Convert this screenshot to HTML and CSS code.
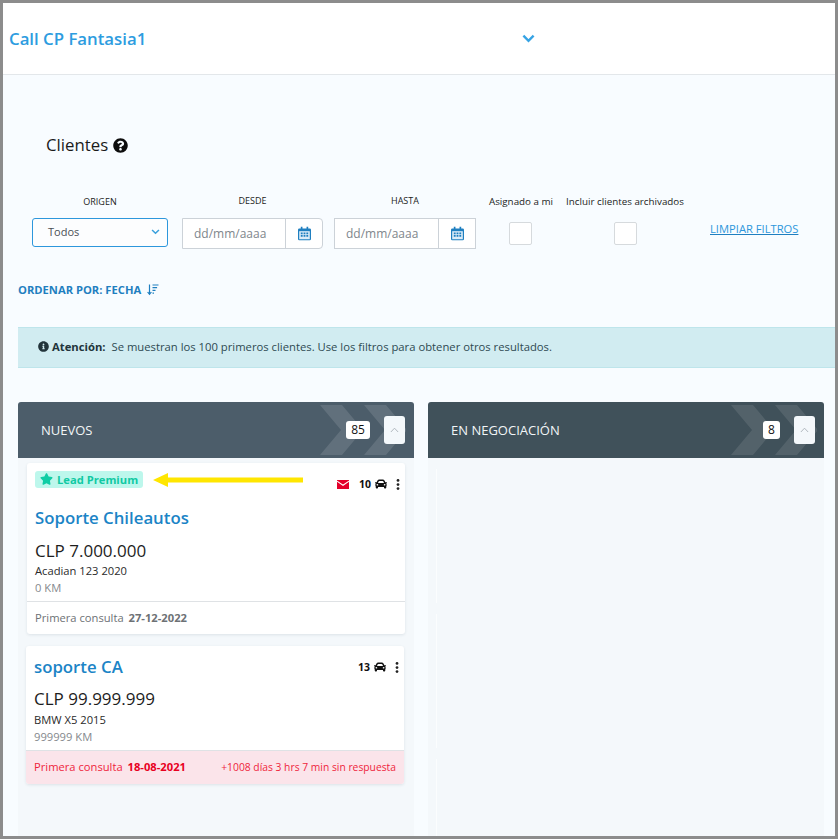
FILE: index.html
```html
<!DOCTYPE html>
<html lang="es">
<head>
<meta charset="utf-8">
<title>Clientes</title>
<link rel="stylesheet" href="styles.css">
</head>
<body>
<div class="frame">
  <header class="topbar">
    <h1 class="account">Call CP Fantasia1</h1>
    <svg class="top-chevron" viewBox="0 0 14 9"><path d="M1.500 1.500 7 7l5.500-5.500" fill="none" stroke="#36a3e4" stroke-width="2.600"/></svg>
  </header>
  <main class="content">
    <div class="title-row">
      <h2 class="title">Clientes</h2>
      <svg class="help" viewBox="0 0 512 512"><path fill="#0d0d0d" d="M504 256c0 136.997-111.043 248-248 248S8 392.997 8 256C8 119.083 119.043 8 256 8s248 111.083 248 248zM262.655 90c-54.497 0-89.255 22.957-116.549 63.758-3.536 5.286-2.353 12.415 2.715 16.258l34.699 26.31c5.205 3.947 12.621 3.008 16.665-2.122 17.864-22.658 30.113-35.797 57.303-35.797 20.429 0 45.698 13.148 45.698 32.958 0 14.976-12.363 22.667-32.534 33.976C247.128 238.528 216 254.941 216 296v4c0 6.627 5.373 12 12 12h56c6.627 0 12-5.373 12-12v-1.333c0-28.462 83.186-29.647 83.186-106.667 0-58.002-60.165-102-116.531-102zM256 338c-25.365 0-46 20.635-46 46 0 25.364 20.635 46 46 46s46-20.636 46-46c0-25.365-20.635-46-46-46z"/></svg>
    </div>

    <div class="filters">
      <div class="field f-origin">
        <label class="label">ORIGEN</label>
        <div class="select"><span>Todos</span>
          <svg class="select-chev" viewBox="0 0 10 7"><path d="M1 1.200 5 5l4-3.800" fill="none" stroke="#3aa0dc" stroke-width="1.800"/></svg>
        </div>
      </div>
      <div class="field f-desde">
        <label class="label label-date">DESDE</label>
        <div class="date rounded"><span class="date-text">dd/mm/aaaa</span>
          <span class="date-btn"><svg class="cal" viewBox="0 0 14 15"><use href="#cal"/></svg></span>
        </div>
      </div>
      <div class="field f-hasta">
        <label class="label label-date">HASTA</label>
        <div class="date"><span class="date-text">dd/mm/aaaa</span>
          <span class="date-btn"><svg class="cal" viewBox="0 0 14 15"><use href="#cal"/></svg></span>
        </div>
      </div>
      <div class="field f-asig">
        <label class="label label-case">Asignado a mi</label>
        <span class="check"></span>
      </div>
      <div class="field f-arch">
        <label class="label label-case">Incluir clientes archivados</label>
        <span class="check check-arch"></span>
      </div>
      <a class="clear" href="#">LIMPIAR FILTROS</a>
    </div>

    <div class="sort">ORDENAR POR: FECHA
      <svg class="sort-icon" viewBox="0 0 12 12"><path d="M2.500 .5v9.500M.6 8 2.500 10.400 4.400 8M5.500 1h6M5.500 3.700h4.600M5.500 6.400h3M5.500 9.100h1.500" fill="none" stroke="#1f7fc0" stroke-width="1.200"/></svg>
    </div>

    <div class="alert">
      <svg class="info" viewBox="0 0 512 512"><path fill="#22343b" d="M256 8C119.043 8 8 119.083 8 256c0 136.997 111.043 248 248 248s248-111.003 248-248C504 119.083 392.957 8 256 8zm0 110c23.196 0 42 18.804 42 42s-18.804 42-42 42-42-18.804-42-42 18.804-42 42-42zm56 254c0 6.627-5.373 12-12 12h-88c-6.627 0-12-5.373-12-12v-24c0-6.627 5.373-12 12-12h12v-64h-12c-6.627 0-12-5.373-12-12v-24c0-6.627 5.373-12 12-12h64c6.627 0 12 5.373 12 12v100h12c6.627 0 12 5.373 12 12v24z"/></svg>
      <strong>Atención:</strong>&nbsp;<span>Se muestran los 100 primeros clientes. Use los filtros para obtener otros resultados.</span>
    </div>

    <div class="board">
      <section class="col">
        <div class="col-head head-new">
          <svg class="chevrons" viewBox="0 0 86 50"><path d="M0 0h22l21 25-21 25H0l21-25zM44 0h22l21 25-21 25H44l21-25z" fill="#fff" fill-opacity=".12"/></svg>
          <span class="col-title">NUEVOS</span>
          <span class="count">85</span>
          <button class="collapse"><svg viewBox="0 0 10 6"><path d="M1 5.200 5 1l4 4.200" fill="none" stroke="#a9b1b8" stroke-width="1"/></svg></button>
        </div>
        <div class="col-body">
          <article class="card card-one">
            <div class="card-main">
              <div class="premium-row">
                <span class="badge"><svg class="star" viewBox="0 0 576 512"><path fill="#0fcda5" d="M259.3 17.8L194 150.2 47.9 171.5c-26.2 3.8-36.7 36.1-17.7 54.6l105.7 103-25 145.5c-4.5 26.3 23.2 46 46.4 33.7L288 439.6l130.7 68.7c23.2 12.2 50.9-7.4 46.4-33.7l-25-145.5 105.7-103c19-18.5 8.5-50.8-17.7-54.6L382 150.2 316.7 17.8c-11.7-23.6-45.6-23.9-57.4 0z"/></svg>Lead Premium</span>
                <svg class="arrow" viewBox="0 0 150 14"><path d="M0 7 15 0v4.500h135v5H15V14z" fill="#ffe600"/></svg>
                <div class="meta meta-one">
                  <svg class="mail" viewBox="0 0 12 9"><rect width="12" height="9" fill="#e4002b"/><path d="M0 1.200 6 5.300l6-4.100" fill="none" stroke="#fff" stroke-width="1.100"/></svg>
                  <span class="meta-num">10</span>
                  <svg class="car" viewBox="0 0 512 512"><use href="#car"/></svg>
                  <svg class="dots" viewBox="0 0 4 12"><circle cx="2" cy="1.600" r="1.500"/><circle cx="2" cy="6" r="1.500"/><circle cx="2" cy="10.400" r="1.500"/></svg>
                </div>
              </div>
              <h3 class="name name-one">Soporte Chileautos</h3>
              <div class="price">CLP 7.000.000</div>
              <div class="vehicle">Acadian 123 2020</div>
              <div class="km">0 KM</div>
            </div>
            <div class="card-foot">Primera consulta <b>27-12-2022</b></div>
          </article>

          <article class="card card-two">
            <div class="card-main main-two">
              <div class="name-row">
                <h3 class="name">soporte CA</h3>
                <div class="meta meta-two">
                  <span class="meta-num">13</span>
                  <svg class="car" viewBox="0 0 512 512"><use href="#car"/></svg>
                  <svg class="dots" viewBox="0 0 4 12"><circle cx="2" cy="1.600" r="1.500"/><circle cx="2" cy="6" r="1.500"/><circle cx="2" cy="10.400" r="1.500"/></svg>
                </div>
              </div>
              <div class="price">CLP 99.999.999</div>
              <div class="vehicle">BMW X5 2015</div>
              <div class="km">999999 KM</div>
            </div>
            <div class="card-foot foot-alert"><span>Primera consulta <b>18-08-2021</b></span><span class="late">+1008 días 3 hrs 7 min sin respuesta</span></div>
          </article>
        </div>
      </section>

      <section class="col">
        <div class="col-head head-neg">
          <svg class="chevrons" viewBox="0 0 86 50"><path d="M0 0h22l21 25-21 25H0l21-25zM44 0h22l21 25-21 25H44l21-25z" fill="#fff" fill-opacity=".1"/></svg>
          <span class="col-title">EN NEGOCIACIÓN</span>
          <span class="count count-neg">8</span>
          <button class="collapse"><svg viewBox="0 0 10 6"><path d="M1 5.200 5 1l4 4.200" fill="none" stroke="#a9b1b8" stroke-width="1"/></svg></button>
        </div>
        <div class="col-body body-neg">
          <div class="ghost"></div>
          <div class="ghost"></div>
          <div class="ghost"></div>
        </div>
      </section>
    </div>
  </main>
</div>

<svg class="defs" aria-hidden="true">
  <symbol id="cal" viewBox="0 0 14 15">
    <path fill="#1f7fc0" d="M3 0h1.800v2H9.200V0H11v2h1.500A1.500 1.500 0 0 1 14 3.500v10a1.500 1.500 0 0 1-1.500 1.500h-11A1.500 1.500 0 0 1 0 13.500v-10A1.500 1.500 0 0 1 1.500 2H3z"/>
    <rect x="1.300" y="5" width="11.400" height="8.700" fill="#dcecf8"/>
    <path fill="#1f7fc0" d="M3 6.500h2v1.700H3zM6 6.500h2v1.700H6zM9 6.500h2v1.700H9zM3 9.200h2v1.700H3zM6 9.200h2v1.700H6zM9 9.200h2v1.700H9z"/>
  </symbol>
  <symbol id="car" viewBox="0 0 512 512">
    <path fill="#111" d="M499.99 176h-59.87l-16.64-41.6C406.38 91.63 365.57 64 319.5 64h-127c-46.06 0-86.88 27.63-103.99 70.4L71.87 176H12.01C4.2 176-1.53 183.34.37 190.91l6 24C7.7 220.25 12.5 224 18.01 224h20.07C24.65 235.73 16 252.78 16 272v48c0 16.12 6.16 30.67 16 41.93V416c0 17.67 14.33 32 32 32h32c17.67 0 32-14.33 32-32v-32h256v32c0 17.67 14.33 32 32 32h32c17.67 0 32-14.33 32-32v-54.07c9.84-11.25 16-25.8 16-41.93v-48c0-19.22-8.65-36.27-22.07-48H494c5.51 0 10.31-3.75 11.64-9.09l6-24c1.890-7.570-3.840-14.910-11.650-14.910zm-352.060-17.830c7.290-18.220 24.940-30.170 44.570-30.170h127c19.630 0 37.280 11.950 44.570 30.170L384 208H128l19.930-49.830zM96 319.800c-19.200 0-32-12.760-32-31.900S76.800 256 96 256s48 28.710 48 47.850-28.800 15.950-48 15.950zm320 0c-19.200 0-48 3.190-48-15.950S396.800 256 416 256s32 12.760 32 31.900-12.800 31.900-32 31.900z"/>
  </symbol>
</svg>
</body>
</html>
```
FILE: styles.css
```css
* { box-sizing: border-box; }
html, body { margin: 0; padding: 0; }
body {
  width: 838px;
  height: 839px;
  overflow: hidden;
  font-family: "Open Sans", "Liberation Sans", sans-serif;
  background: #8c8c8c;
}
.defs { width: 0; height: 0; position: absolute; }
.frame {
  width: 838px;
  height: 839px;
  border: 3px solid #8c8c8c;
  overflow: hidden;
  background: #f8fcff;
}
.topbar {
  height: 72px;
  background: #fff;
  border-bottom: 1px solid #e3e7ea;
  display: flex;
  align-items: center;
  padding: 0 0 0 6px;
  position: relative;
}
.account {
  margin: 0;
  font-size: 16.800px;
  font-weight: 600;
  color: #2d9ce0;
  line-height: 72px;
}
.top-chevron {
  width: 13px;
  height: 9px;
  position: absolute;
  left: 519px;
  top: 31px;
}
.title-row {
  display: flex;
  align-items: center;
  gap: 5px;
  padding: 59px 0 0 43px;
  height: 81px;
}
.title {
  margin: 0;
  font-size: 16.800px;
  font-weight: 400;
  line-height: 22px;
  color: #1a1a1a;
}
.help { width: 15px; height: 15px; }
.filters {
  display: flex;
  align-items: flex-start;
  padding: 0 0 0 29px;
  margin-top: 35px;
  height: 57px;
}
.field { display: flex; flex-direction: column; align-items: center; }
.f-origin { width: 136px; margin-right: 14px; }
.f-desde { width: 141px; margin-right: 11px; }
.f-hasta { width: 142px; margin-right: 13px; }
.f-asig { width: 64px; margin-right: 13px; }
.f-arch { width: 118px; margin-right: 27px; }
.label {
  height: 20px;
  margin-bottom: 7px;
  font-size: 9px;
  line-height: 22px;
  color: #1c1c1c;
  white-space: nowrap;
}
.label-date { margin-bottom: 8px; line-height: 20px; }
.label-case { margin-bottom: 8px; font-size: 9.800px; font-weight: 400; line-height: 22px; }
.select {
  width: 136px;
  height: 29px;
  border: 1px solid #2d97dc;
  border-radius: 3px;
  background: #fcfdfe;
  display: flex;
  align-items: center;
  justify-content: space-between;
  padding: 0 7px 2px 15px;
  font-size: 11px;
  color: #4a4f55;
}
.select-chev { width: 9px; height: 6px; }
.date {
  width: 100%;
  height: 31px;
  border: 1px solid #ccd2d8;
  background: #fff;
  display: flex;
  margin-top: -1px;
}
.rounded { border-radius: 0 4px 4px 0; }
.date-text {
  flex: 1;
  font-size: 12px;
  line-height: 29px;
  padding-left: 11px;
  color: #80868c;
}
.date-btn {
  width: 37px;
  border-left: 1px solid #ccd2d8;
  display: flex;
  align-items: center;
  justify-content: center;
}
.cal { width: 13px; height: 15px; }
.check {
  display: block;
  width: 23px;
  height: 23px;
  border: 1px solid #d6dadd;
  border-radius: 2px;
  background: #fff;
  margin-top: 3px;
  margin-left: -2px;
}
.check-arch { margin-left: 0; }
.clear {
  font-size: 11.200px;
  line-height: 14px;
  margin-top: 31px;
  margin-left: -1px;
  color: #2d97dc;
  text-decoration: underline;
  text-decoration-color: #1f7fc0;
}
.sort {
  display: flex;
  align-items: center;
  gap: 6px;
  margin: 34px 0 0 15px;
  height: 16px;
  padding-bottom: 1px;
  font-size: 11.200px;
  font-weight: 700;
  color: #1f7fc0;
}
.sort-icon { width: 12px; height: 12px; }
.alert {
  margin: 29px 0 0 15px;
  height: 41px;
  background: #d1ecf1;
  border: solid #bee5eb;
  border-width: 1px 0;
  display: flex;
  align-items: center;
  padding: 0 0 2px 20px;
  font-size: 11.280px;
  color: #2e4a52;
}
.alert strong { font-weight: 700; color: #22343b; margin-right: 3px; }
.info { width: 11px; height: 11px; margin-right: 3px; }
.board {
  display: flex;
  gap: 14px;
  margin: 34px 0 0 15px;
}
.col { width: 396px; }
.col-head {
  height: 56px;
  position: relative;
  display: flex;
  align-items: center;
  border-radius: 3px 3px 0 0;
  color: #fff;
  overflow: hidden;
  padding-left: 23px;
}
.head-new { background: #4c5d6a; }
.head-neg { background: #40515a; }
.chevrons {
  position: absolute;
  width: 86px;
  height: 50px;
  top: 3px;
  right: 8px;
}
.head-neg .chevrons { right: 7px; }
.col-title { flex: 1; font-size: 13px; font-weight: 400; position: relative; color: #f2f5f7; }
.count {
  position: relative;
  background: #fff;
  border-radius: 3px;
  min-width: 24px;
  height: 18px;
  line-height: 18px;
  text-align: center;
  font-size: 12px;
  color: #111;
  margin-right: 14px;
}
.count-neg { min-width: 17px; }
.collapse {
  position: relative;
  width: 21px;
  height: 28px;
  padding: 0;
  border: 0;
  border-radius: 3px;
  background: #f4f8fb;
  margin-right: 9px;
  display: flex;
  align-items: center;
  justify-content: center;
}
.collapse svg { width: 9px; height: 6px; }
.col-body {
  background: #f4f8fb;
  height: 380px;
  padding: 5px 9px 0 8px;
}
.card {
  width: 378px;
  background: #fff;
  border-radius: 3px;
  box-shadow: 0 1px 3px rgba(60, 80, 100, .12);
  overflow: hidden;
  display: flex;
  flex-direction: column;
}
.card-one { height: 171px; margin-left: 1px; }
.card-main { padding: 8px 0 0 8px; }
.premium-row { display: flex; align-items: center; height: 17px; }
.badge {
  display: flex;
  align-items: center;
  width: 108px;
  height: 17px;
  background: #bdf7ec;
  border-radius: 3px;
  padding: 0 0 1px 5px;
  font-size: 11.200px;
  font-weight: 700;
  color: #10c9a3;
  gap: 4px;
  white-space: nowrap;
}
.star { width: 13px; height: 12px; }
.arrow { width: 150px; height: 14px; margin-left: 10px; }
.meta { display: flex; align-items: center; gap: 4px; padding-right: 5px; }
.meta-one { margin-left: auto; margin-top: 9px; }
.meta-two { margin-top: 4px; }
.meta-num { font-size: 10.500px; font-weight: 700; color: #111; }
.mail { width: 12px; height: 9px; margin-right: 6px; }
.car { width: 12px; height: 12px; }
.dots { width: 4px; height: 11px; margin-left: 5px; fill: #222; }
.name {
  margin: 0;
  font-size: 16.800px;
  font-weight: 600;
  color: #1b84c6;
  line-height: 22px;
}
.name-one { margin-top: 19px; }
.price {
  font-size: 17px;
  line-height: 22px;
  font-weight: 400;
  color: #1d1d1d;
  margin-top: 11px;
}
.vehicle { font-size: 11.200px; line-height: 17px; color: #2a2a2a; }
.km { font-size: 11.200px; line-height: 17px; color: #85898d; }
.card-foot {
  margin-top: auto;
  height: 33px;
  border-top: 1px solid #dfe2e5;
  display: flex;
  align-items: center;
  padding: 0 0 2px 8px;
  font-size: 11.200px;
  color: #6d7175;
  white-space: pre;
}
.card-foot b { font-weight: 700; margin-left: 2px; }
.card-two { margin-top: 12px; height: 138px; }
.main-two { padding-top: 10px; }
.name-row { display: flex; justify-content: space-between; align-items: flex-start; }
.main-two .price { margin-top: 10px; }
.main-two .vehicle { margin-top: 1px; }
.foot-alert {
  height: 34px;
  background: #fbe4ea;
  color: #ef1f3c;
  justify-content: space-between;
  padding-right: 8px;
}
.foot-alert b { color: #e8001f; }
.late { font-size: 10.300px; }
.ghost {
  height: 134px;
  margin: 0 0 11px;
  border-left: 1px solid #fbfdfe;
}
.body-neg { padding-top: 11px; }
```
